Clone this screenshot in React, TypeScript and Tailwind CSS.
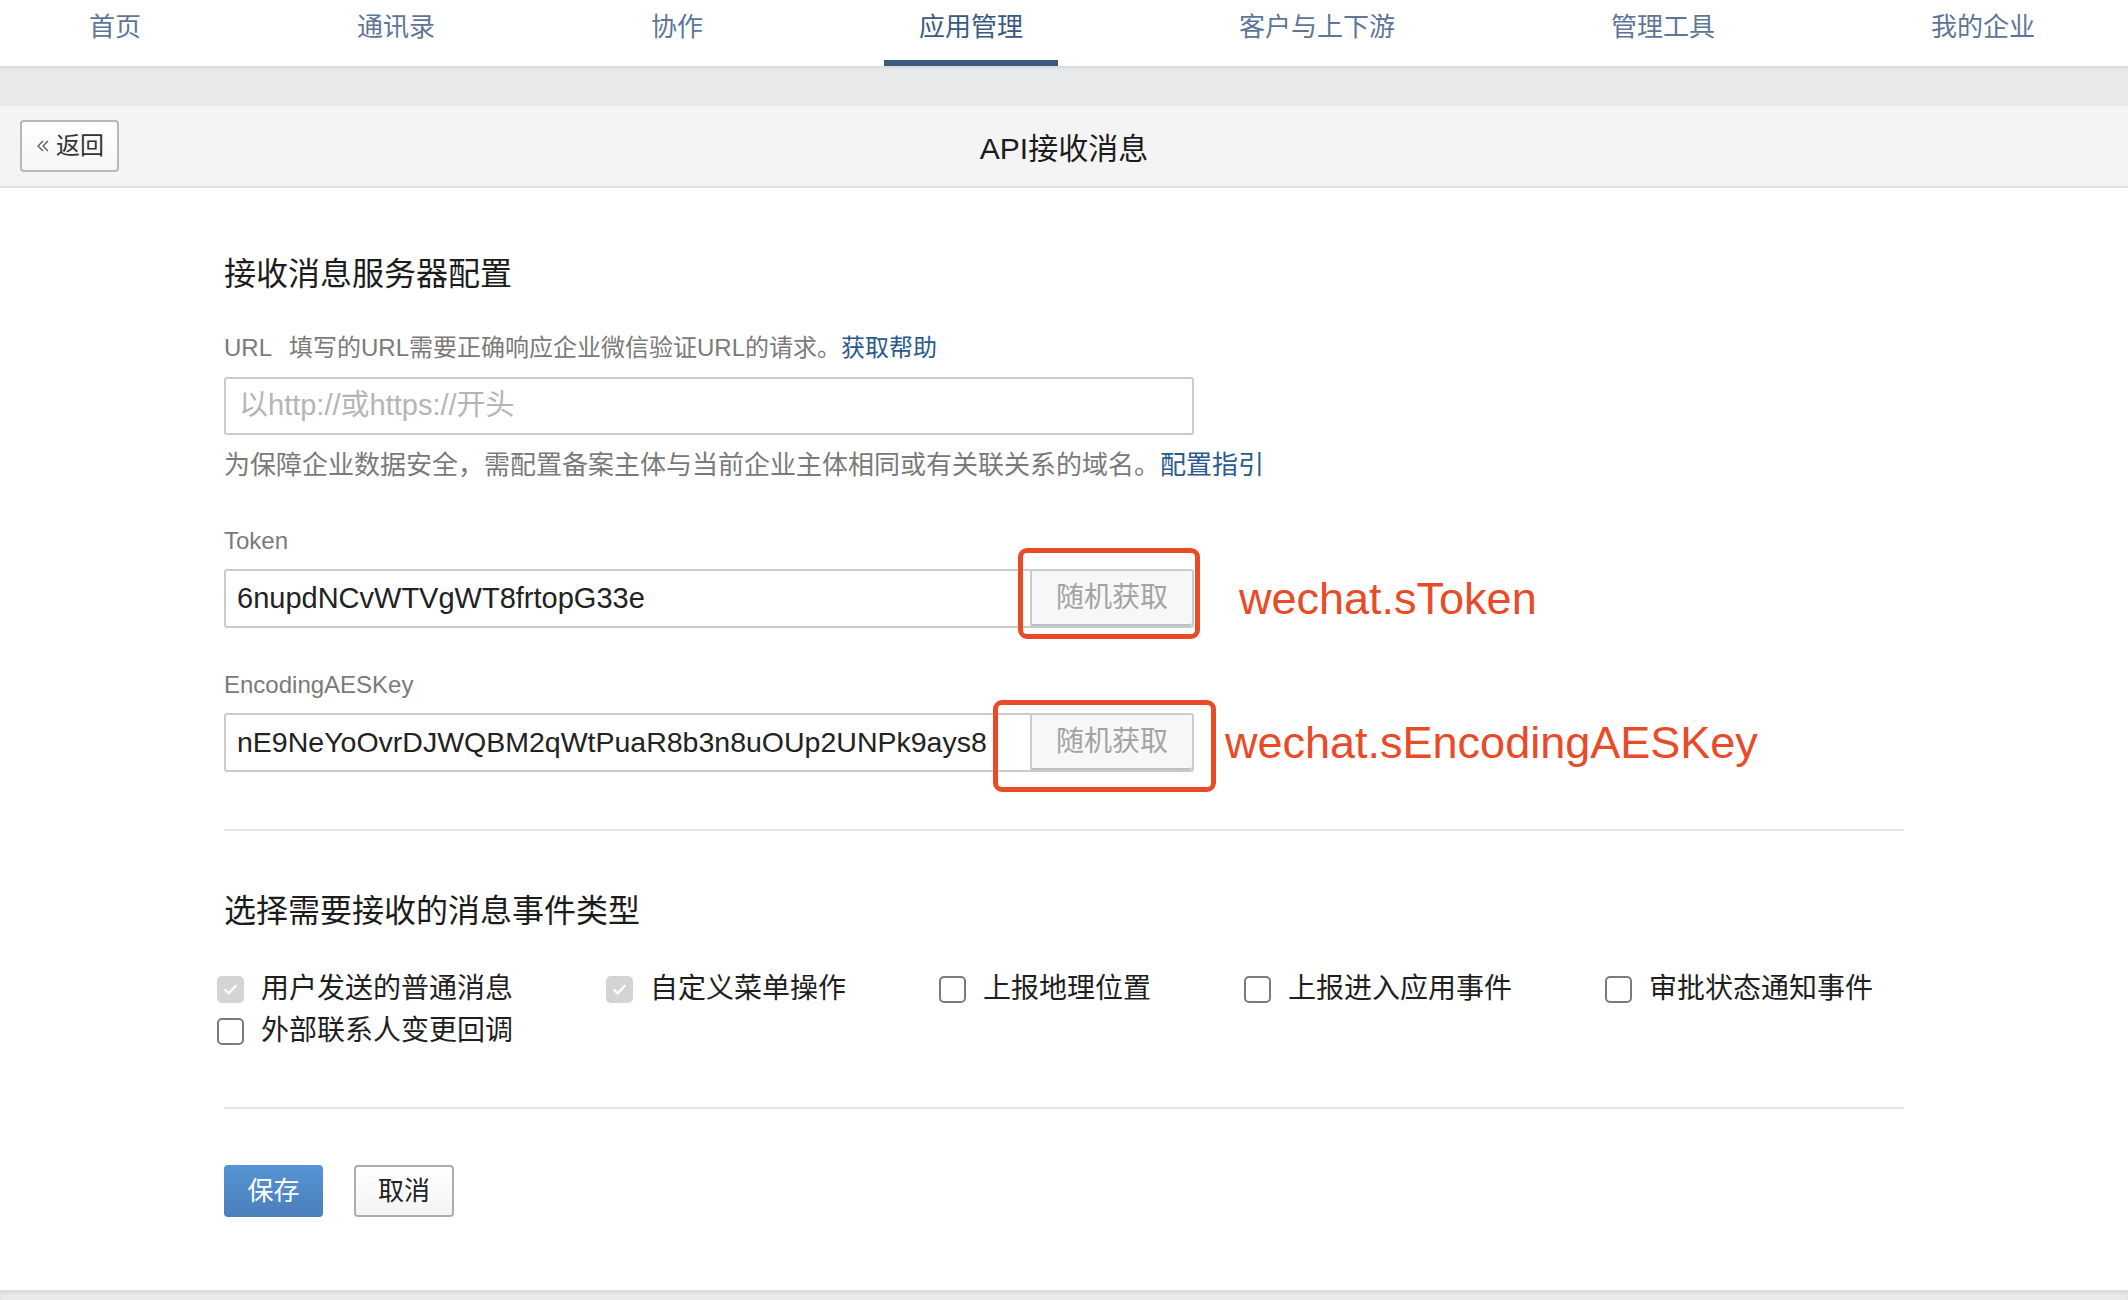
import React from 'react'

const font = { fontFamily: '"Liberation Sans", "Noto Sans CJK SC", sans-serif' }

const tabs = ['首页', '通讯录', '协作', '应用管理', '客户与上下游', '管理工具', '我的企业']

const events = [
  { label: '用户发送的普通消息', checked: true },
  { label: '自定义菜单操作', checked: true },
  { label: '上报地理位置', checked: false },
  { label: '上报进入应用事件', checked: false },
  { label: '审批状态通知事件', checked: false },
  { label: '外部联系人变更回调', checked: false },
]

const CheckBox = ({ checked }: { checked: boolean }) =>
  checked ? (
    <div className="w-[27px] h-[27px] rounded-[5px] bg-[#d4d4d4] flex items-center justify-center shrink-0">
      <svg width="17" height="17" viewBox="0 0 16 16" fill="none">
        <path d="M3 8.5l3.2 3.2L13 4.5" stroke="white" strokeWidth="2.2" strokeLinecap="round" strokeLinejoin="round" />
      </svg>
    </div>
  ) : (
    <div className="w-[27px] h-[27px] rounded-[5px] border-2 border-[#7b7b7b] bg-white shrink-0" />
  )

const KeyRow = ({ value, size, note, noteGap, box }: { value: string; size: string; note: string; noteGap: string; box: string }) => (
  <div className="relative flex items-center">
    <div className="w-[970px] h-[59px] flex border-2 border-[#cbcbcb] rounded-[3px] bg-white">
      <div className={`flex-1 pl-[11px] flex items-center text-[#222] overflow-hidden whitespace-nowrap ${size}`}>{value}</div>
      <div className="w-[162px] h-full flex items-center justify-center border-l-2 border-[#c9cdd2] border-b-2 border-b-[#b9c0c8] bg-[#f7f7f7] rounded-r-[3px] text-[28px] text-[#a3a3a3] -mb-[2px]">
        随机获取
      </div>
    </div>
    <div className={`absolute border-[5px] border-[#e94b29] rounded-[9px] ${box}`} />
    <div className={`text-[45px] leading-[52px] text-[#e94b29] ${noteGap}`}>{note}</div>
  </div>
)

export default function App() {
  return (
    <div className="w-[2128px] h-[1300px] bg-[#e8e9eb] overflow-hidden" style={font}>
      {/* top nav */}
      <div className="relative z-10 h-[66px] bg-white shadow-[0_2px_3px_rgba(0,0,0,0.08)] flex pl-[54px] gap-[146px]">
        {tabs.map((t) => (
          <div
            key={t}
            className={
              t === '应用管理'
                ? 'h-[66px] px-[35px] pt-[10px] text-[26px] leading-[34px] text-[#3b5a82] border-b-[6px] border-[#3b5a80]'
                : 'h-[66px] px-[35px] pt-[10px] text-[26px] leading-[34px] text-[#5d7698]'
            }
          >
            {t}
          </div>
        ))}
      </div>

      <div className="h-[40px] bg-[#e8e9eb]" />

      {/* header bar */}
      <div className="h-[82px] bg-[#f4f4f4] border-b-2 border-[#e1e2e4] grid grid-cols-[1fr_auto_1fr] items-center">
        <div className="pl-[20px]">
          <button className="w-[99px] h-[52px] border-2 border-[#b8b8b8] rounded-[4px] bg-gradient-to-b from-white to-[#f6f6f6] flex items-center justify-center gap-[5px] text-[24px] text-[#333]">
            <svg width="16" height="16" viewBox="0 0 16 16" fill="none">
              <path d="M8 3L3 8l5 5M13 3L8 8l5 5" stroke="#555" strokeWidth="1.3" />
            </svg>
            返回
          </button>
        </div>
        <div className="pt-[4px] text-[30px] text-[#1c1c1c]">API接收消息</div>
        <div />
      </div>

      {/* main */}
      <div className="bg-white pl-[224px] pt-[64px] pb-[73px]">
        <div className="w-[1680px]">
          <div className="text-[32px] leading-[44px] text-[#1c1c1c]">接收消息服务器配置</div>

          <div className="mt-[36px] text-[24px] leading-[32px] text-[#7a7a7a]">
            URL<span className="ml-[17px]">填写的URL需要正确响应企业微信验证URL的请求。</span>
            <span className="text-[#2b5a8c]">获取帮助</span>
          </div>
          <div className="mt-[13px] w-[970px] h-[58px] border-2 border-[#cbcbcb] rounded-[3px] pl-[13px] flex items-center text-[29px] text-[#b5b5b5]">
            以http://或https://开头
          </div>
          <div className="mt-[12px] text-[26px] leading-[36px] text-[#7a7a7a]">
            为保障企业数据安全，需配置备案主体与当前企业主体相同或有关联关系的域名。
            <span className="text-[#2b5a8c]">配置指引</span>
          </div>

          <div className="mt-[42px] text-[24px] leading-[32px] text-[#7a7a7a]">Token</div>
          <div className="mt-[12px]">
            <KeyRow
              value="6nupdNCvWTVgWT8frtopG33e"
              size="text-[29px]"
              note="wechat.sToken"
              noteGap="ml-[45px]"
              box="left-[794px] top-[-21px] w-[182px] h-[91px]"
            />
          </div>

          <div className="mt-[41px] text-[24px] leading-[32px] text-[#7a7a7a]">EncodingAESKey</div>
          <div className="mt-[12px]">
            <KeyRow
              value="nE9NeYoOvrDJWQBM2qWtPuaR8b3n8uOUp2UNPk9ays8"
              size="text-[28.5px]"
              note="wechat.sEncodingAESKey"
              noteGap="ml-[31px]"
              box="left-[769px] top-[-13px] w-[223px] h-[92px]"
            />
          </div>

          <div className="mt-[57px] h-[2px] bg-[#e4e4e6]" />

          <div className="mt-[58px] text-[32px] leading-[44px] text-[#1c1c1c]">选择需要接收的消息事件类型</div>

          <div className="mt-[35px] -ml-[7px] flex flex-wrap w-[1780px]">
            {events.map((e) => (
              <div key={e.label} className="flex items-center h-[42px] mr-[93px]">
                <CheckBox checked={e.checked} />
                <span className="ml-[17px] text-[28px] text-[#1f1f1f]">{e.label}</span>
              </div>
            ))}
          </div>

          <div className="mt-[55px] h-[2px] bg-[#e4e4e6]" />

          <div className="mt-[56px] flex gap-[31px]">
            <button className="w-[99px] h-[52px] rounded-[4px] bg-gradient-to-b from-[#5694d4] to-[#4a7ebb] text-white text-[26px]">保存</button>
            <button className="w-[100px] h-[52px] rounded-[4px] border-2 border-[#adadad] bg-gradient-to-b from-white to-[#f4f4f4] text-[#222] text-[26px]">取消</button>
          </div>
        </div>
      </div>
      <div className="h-[10px] shadow-[inset_0_3px_3px_rgba(0,0,0,0.06)]" />
    </div>
  )
}
